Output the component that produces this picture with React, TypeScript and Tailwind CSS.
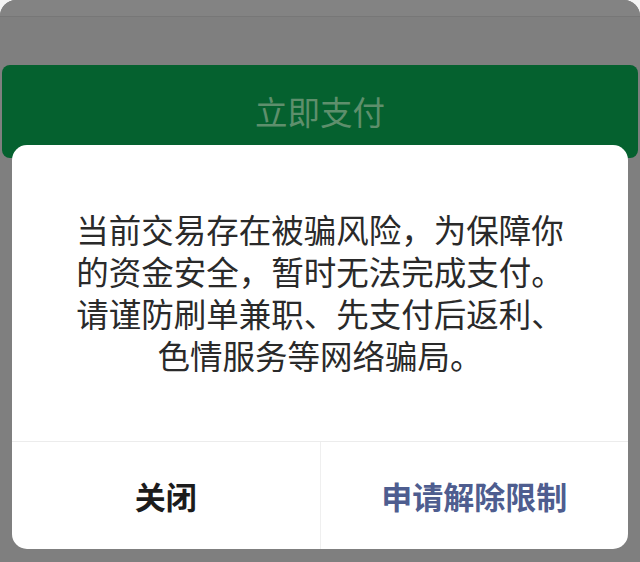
export default function App() {
  return (
    <div
      className="w-[640px] h-[562px] bg-[#f4f4f4] overflow-hidden"
      style={{ fontFamily: '"Noto Sans CJK SC", "Noto Sans", sans-serif' }}
    >
      <div className="relative w-full h-full bg-[#7f7f7f] rounded-t-[16px] overflow-hidden">
        {/* page behind the mask */}
        <div className="h-[17px] bg-[#838383] border-b border-[#777777]" />
        <div className="h-[48px]" />
        <div className="mx-[2px] h-[93px] rounded-[8px] bg-[#05612f] flex items-center justify-center pb-[1px]">
          <span className="text-[32.5px] leading-none text-[#5e8f6c]">立即支付</span>
        </div>

        {/* dialog */}
        <div className="absolute left-[12px] top-[145px] w-[616px] h-[404px] rounded-[15px] bg-white flex flex-col">
          <div className="flex-1 flex items-center justify-center pb-[2px]">
            <p className="text-center text-[32.5px] leading-[42px] text-[#2a2a2a]">
              当前交易存在被骗风险，为保障你
              <br />
              的资金安全，暂时无法完成支付。
              <br />
              请谨防刷单兼职、先支付后返利、
              <br />
              色情服务等网络骗局。
            </p>
          </div>
          <div className="h-[108px] border-t border-[#ececec] flex">
            <div className="flex-1 flex items-center justify-center pb-[1px] border-r border-[#efefef]">
              <span className="text-[31px] leading-none font-bold text-[#1c1c1c]">关闭</span>
            </div>
            <div className="flex-1 flex items-center justify-center pb-[1px]">
              <span className="text-[31px] leading-none font-bold text-[#4e5d8f]">申请解除限制</span>
            </div>
          </div>
        </div>
      </div>
    </div>
  );
}
